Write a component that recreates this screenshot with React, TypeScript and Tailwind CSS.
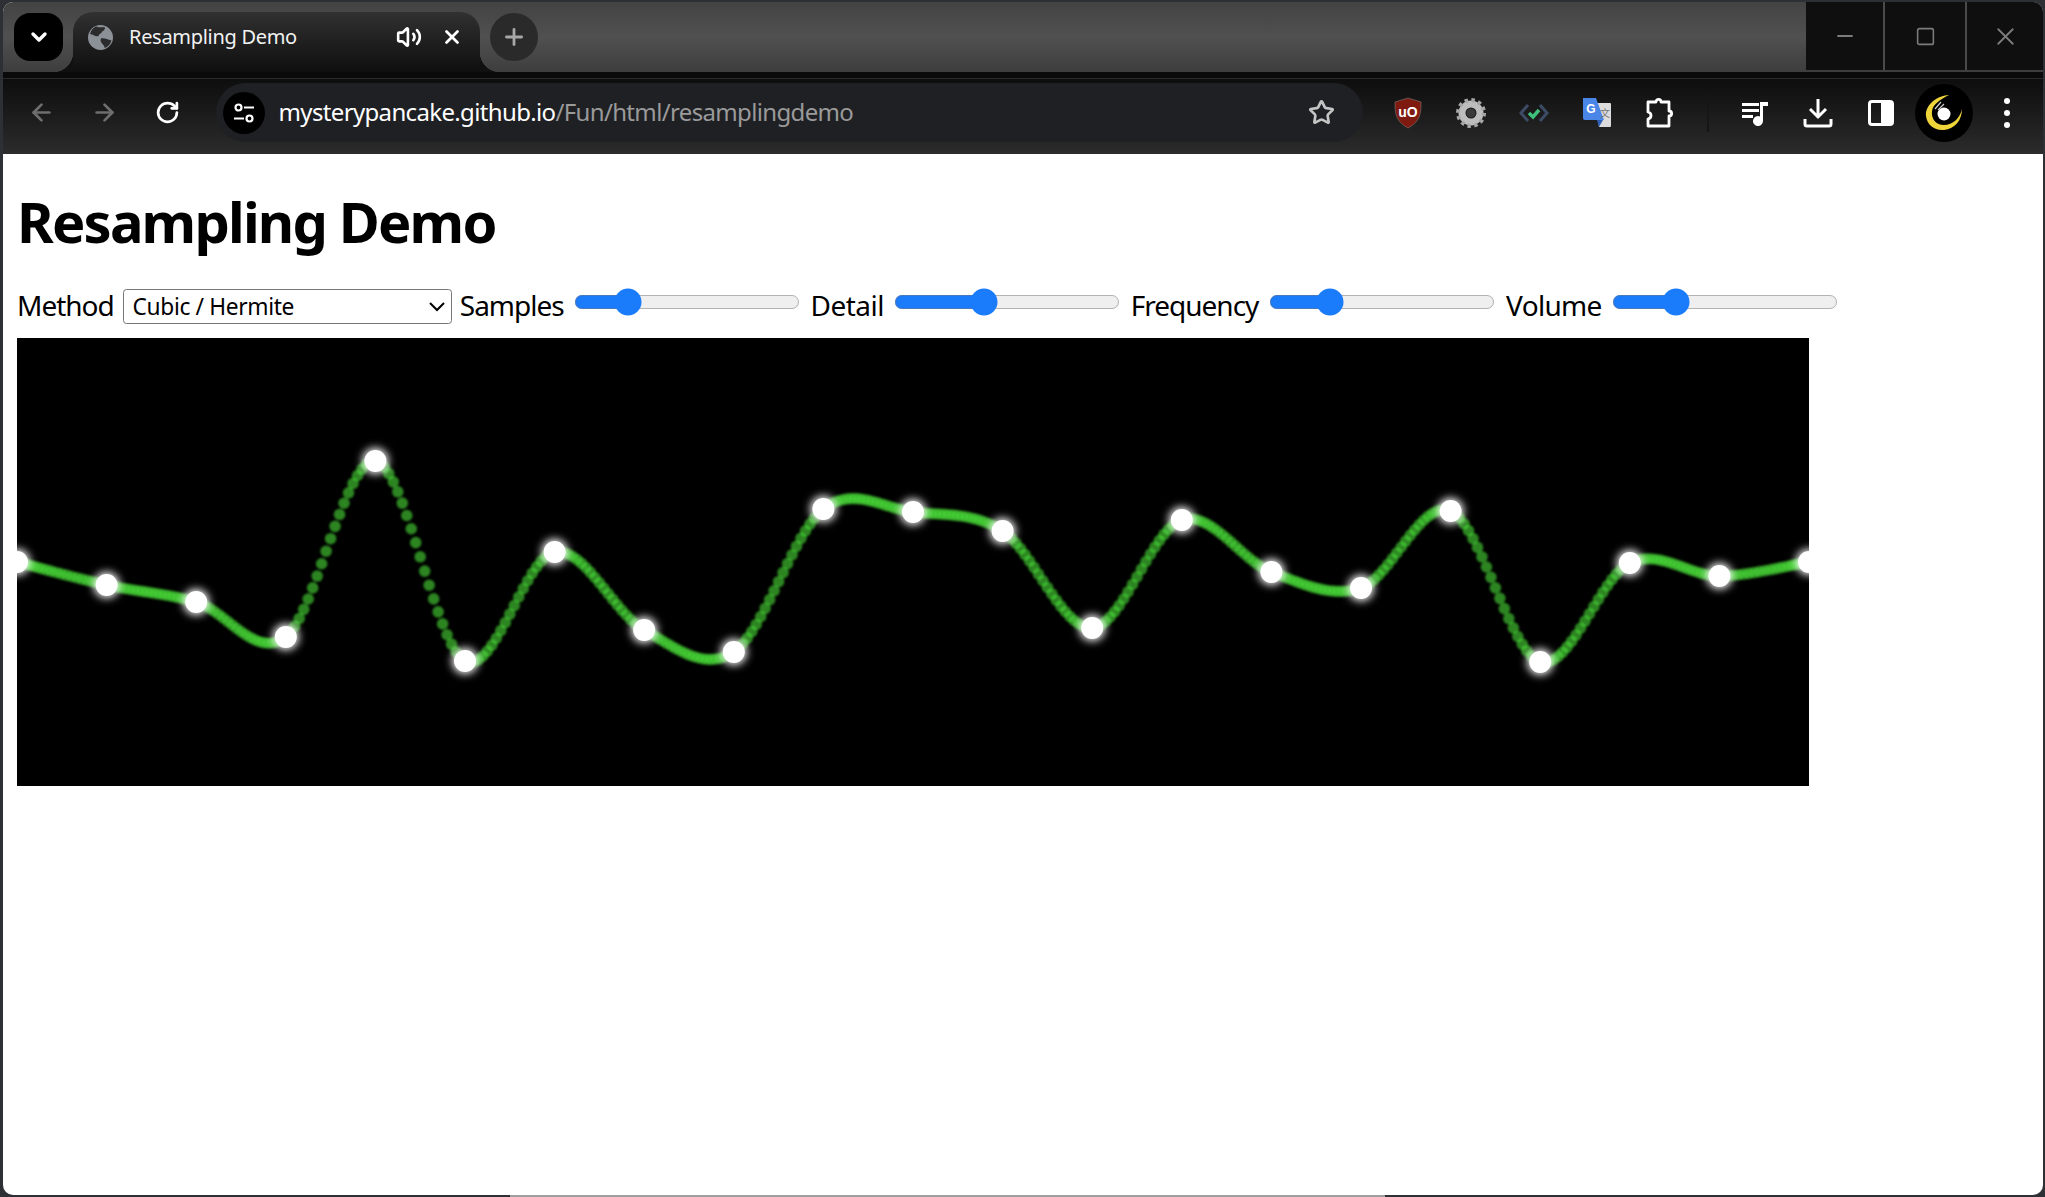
import { ArrowLeft, ArrowRight, ChevronDown, Minus, Plus, RotateCw, Square, Star, Volume2, X } from 'lucide-react'

const ys = [562, 585, 602, 637, 461, 661, 552, 630, 652, 509, 512, 531, 628, 520, 572, 588, 511, 662, 563, 576, 562]
const step = 89.6
const nodes = ys.map((y, i) => ({ x: i * step, y: y - 338 }))

// hermite through the nodes, tangents from the neighbours
function curveDots(perSegment: number) {
  const dots: { x: number; y: number }[] = []
  for (let i = 0; i < nodes.length - 1; i++) {
    const p0 = nodes[Math.max(i - 1, 0)]
    const p1 = nodes[i]
    const p2 = nodes[i + 1]
    const p3 = nodes[Math.min(i + 2, nodes.length - 1)]
    for (let k = 0; k < perSegment; k++) {
      const t = k / perSegment
      const t2 = t * t
      const t3 = t2 * t
      const a = 2 * t3 - 3 * t2 + 1
      const b = t3 - 2 * t2 + t
      const c = -2 * t3 + 3 * t2
      const d = t3 - t2
      dots.push({
        x: a * p1.x + (b * (p2.x - p0.x)) / 2 + c * p2.x + (d * (p3.x - p1.x)) / 2,
        y: a * p1.y + (b * (p2.y - p0.y)) / 2 + c * p2.y + (d * (p3.y - p1.y)) / 2,
      })
    }
  }
  return dots
}

function Wave() {
  return (
    <svg width="1792" height="448" viewBox="0 0 1792 448" className="block">
      <defs>
        <filter id="soft" x="-10%" y="-10%" width="120%" height="120%">
          <feGaussianBlur stdDeviation="0.8" />
        </filter>
        <filter id="glow" x="-80%" y="-80%" width="260%" height="260%">
          <feGaussianBlur stdDeviation="4" />
        </filter>
      </defs>
      <g filter="url(#soft)">
        {curveDots(20).map((d, i) => (
          <circle key={i} cx={d.x} cy={d.y} r="5.800" fill="#4ce63a" fillOpacity="0.58" />
        ))}
      </g>
      {nodes.map((n, i) => (
        <g key={i}>
          <circle cx={n.x} cy={n.y} r="13" fill="#fff" filter="url(#glow)" />
          <circle cx={n.x} cy={n.y} r="11" fill="#fff" />
        </g>
      ))}
    </svg>
  )
}

function Slider({ value }: { value: number }) {
  return (
    <input
      type="range"
      min={0}
      max={100}
      defaultValue={value}
      className="[zoom:1.75] mx-[2px] mt-[1px] w-[129px] align-baseline accent-[#1a7bfb]"
    />
  )
}

function ToolButton({ children }: { children: React.ReactNode }) {
  return <div className="flex h-[44px] w-[63px] shrink-0 items-center justify-center">{children}</div>
}

function TabBar() {
  return (
    <div className="flex h-[70px] shrink-0 items-stretch bg-gradient-to-b from-[#434343] via-[#505050] to-[#3e3e3e]">
      <div className="ml-[11px] mt-[11px] flex h-[48px] w-[49px] items-center justify-center rounded-[16px] bg-black">
        <ChevronDown size={24} strokeWidth={3.4} className="text-white" />
      </div>
      <div className="relative ml-[10px] mt-[10px] flex w-[407px] items-center rounded-t-[20px] bg-gradient-to-b from-[#313131] to-[#0f0f0f] pb-[10px] pl-[15px]">
        <div className="absolute bottom-0 left-[-20px] h-[20px] w-[20px] bg-[radial-gradient(circle_at_0_0,transparent_20px,#101010_20.5px)]" />
        <div className="absolute bottom-0 right-[-20px] h-[20px] w-[20px] bg-[radial-gradient(circle_at_100%_0,transparent_20px,#101010_20.5px)]" />
        <svg width="25" height="25" viewBox="0 0 25 25" className="shrink-0">
          <circle cx="12.5" cy="12.5" r="12.5" fill="#8b9197" />
          <path d="M8 1.5c3 1 6 1 8.5 .5 1 2 -.5 4 -2.5 4.500-.5 2.500-3 2-3.500 4.500-3 1-5-1.500-8.500-2 .8-3.200 3-6 6-7.500z" fill="#2b2b2b" />
          <path d="M13 13.500c3-.8 6 .5 10.500 2-1 3.500-3.500 6.500-7 7.500 .5-2-1.500-3-2.500-4.500-1-1.500-2-3-1-5z" fill="#2b2b2b" />
        </svg>
        <span className="ml-[16px] w-[269px] font-['Noto_Sans'] text-[20px] leading-none tracking-[-0.3px] text-[#f2f2f2]">Resampling Demo</span>
        <Volume2 size={26} strokeWidth={2.4} className="ml-[-2px] text-white" />
        <X size={22} strokeWidth={3} className="ml-[19px] text-white" />
      </div>
      <div className="ml-[10px] mt-[11px] flex h-[48px] w-[48px] items-center justify-center rounded-full bg-[#2a2a2a]">
        <Plus size={26} strokeWidth={2.6} className="text-[#a8a8a8]" />
      </div>
      <div className="flex-1" />
      <div className="flex h-[68px] w-[237px] bg-[#0f0f0f] text-[#7c7c7c]">
        <div className="flex w-[79px] items-center justify-center border-r-2 border-[#4a4a4a]">
          <Minus size={24} strokeWidth={1.8} />
        </div>
        <div className="flex w-[82px] items-center justify-center border-r-2 border-[#4a4a4a]">
          <Square size={21} strokeWidth={1.8} />
        </div>
        <div className="flex flex-1 items-center justify-center">
          <X size={29} strokeWidth={1.5} />
        </div>
      </div>
    </div>
  )
}

function Toolbar() {
  return (
    <div className="flex h-[82px] shrink-0 flex-col bg-gradient-to-b from-[#0b0b0b] to-[#2c2c2c]">
      <div className="h-[7px] border-b border-[#2a2a2a] bg-[#0a0a0a]" />
      <div className="flex flex-1 items-center pl-[6.500px] pb-[8px]">
        <ToolButton><ArrowLeft size={27} strokeWidth={2.4} className="text-[#6e6e6e]" /></ToolButton>
        <ToolButton><ArrowRight size={27} strokeWidth={2.4} className="text-[#6e6e6e]" /></ToolButton>
        <ToolButton><RotateCw size={25} strokeWidth={2.6} className="text-white" /></ToolButton>
        <div className="ml-[17px] flex h-[59px] w-[1147px] shrink-0 items-center rounded-full bg-[#1f2024] pl-[7px] pr-[28px]">
          <div className="flex h-[42px] w-[42px] items-center justify-center rounded-full bg-black">
            <svg width="24" height="24" viewBox="0 0 24 24" fill="none" stroke="#fff" strokeWidth="2.2">
              <circle cx="6.500" cy="6.500" r="3" />
              <path d="M12 6.500h10M2 17.500h10" />
              <circle cx="17.500" cy="17.500" r="3" />
            </svg>
          </div>
          <div className="mb-[2px] ml-[14px] flex-1 font-['Noto_Sans'] text-[24px] tracking-[-0.65px] text-white">
            mysterypancake.github.io<span className="text-[#9a9a9a]">/Fun/html/resamplingdemo</span>
          </div>
          <Star size={27} strokeWidth={2.4} className="text-[#c4c4c4]" />
        </div>
        <div className="ml-[14px] flex items-center">
          <ToolButton>
            <svg width="28" height="32" viewBox="0 0 28 32">
              <path d="M14 1l13 4c0 10 0 19-13 26C1 24 1 15 1 5z" fill="#7f1a10" stroke="#8a8a8a" strokeWidth=".5" />
              <text x="14" y="20" textAnchor="middle" fill="#fff" fontSize="14" fontWeight="700" fontFamily="Liberation Sans, sans-serif">uO</text>
            </svg>
          </ToolButton>
          <ToolButton>
            <svg width="30" height="30" viewBox="0 0 30 30">
              <circle cx="15" cy="15" r="9" fill="none" stroke="#bdbdbd" strokeWidth="7" />
              <circle cx="15" cy="15" r="13" fill="none" stroke="#a6a6a6" strokeWidth="4" strokeDasharray="3.400 3.407" />
              <circle cx="15" cy="15" r="4.500" fill="#3a3a3a" />
            </svg>
          </ToolButton>
          <ToolButton>
            <svg width="30" height="22" viewBox="0 0 30 22" fill="none">
              <path d="M9 3l-7 8 7 8M21 3l7 8-7 8" stroke="#3d4c66" strokeWidth="3" />
              <path d="M10 11l4 4 6-7" stroke="#3fc07a" strokeWidth="3.500" />
            </svg>
          </ToolButton>
          <ToolButton>
            <svg width="30" height="30" viewBox="0 0 30 30">
              <path d="M13 5h15a1 1 0 0 1 1 1v22a1 1 0 0 1-1 1H17z" fill="#dcdcdc" />
              <path d="M1 0h13l8 22H3a2 2 0 0 1-2-2z" fill="#4a86e8" />
              <path d="M15 22h6l-4 7z" fill="#2e5fb8" />
              <text x="9" y="15" textAnchor="middle" fill="#fff" fontSize="12" fontWeight="700" fontFamily="Liberation Sans, sans-serif">G</text>
              <text x="23" y="19" textAnchor="middle" fill="#777" fontSize="10" fontFamily="Noto Sans CJK SC, sans-serif">文</text>
            </svg>
          </ToolButton>
          <ToolButton>
            <svg width="30" height="32" viewBox="0 0 30 32" fill="none" stroke="#fff" strokeWidth="2.800" strokeLinejoin="round">
              <path d="M3 5h8c0-3.500 5-3.500 5 0h8v9c3.500 0 3.500 5 0 5v10H3v-7c4-1 4-6 0-7z" />
            </svg>
          </ToolButton>
        </div>
        <div className="flex w-[32px] shrink-0 justify-center">
          <div className="h-[38px] w-[2px] bg-[#161616]" />
        </div>
        <ToolButton>
          <svg width="28" height="26" viewBox="0 0 28 26" fill="#fff">
            <path d="M1 3h17v3H1zM1 9h17v3H1zM1 15h11v3H1z" />
            <path d="M19 2h8v4h-5v15a5 5 0 1 1-3-4.500z" />
          </svg>
        </ToolButton>
        <ToolButton>
          <svg width="30" height="30" viewBox="0 0 30 30" fill="none" stroke="#fff" strokeWidth="3">
            <path d="M15 1v18M7 11l8 8 8-8" />
            <path d="M2 21v5a2 2 0 0 0 2 2h22a2 2 0 0 0 2-2v-5" />
          </svg>
        </ToolButton>
        <ToolButton>
          <svg width="26" height="26" viewBox="0 0 26 26">
            <rect x="1.500" y="1.500" width="23" height="23" rx="2.500" fill="none" stroke="#fff" strokeWidth="3" />
            <rect x="13" y="1.500" width="11.500" height="23" fill="#fff" />
          </svg>
        </ToolButton>
        <ToolButton>
          <div className="flex h-[58px] w-[58px] shrink-0 items-center justify-center rounded-full bg-black">
            <svg width="38" height="38" viewBox="0 0 38 38" fill="none">
              <path d="M24 1C10 2 0 12 1 22c1 9 9 15 18 14 11-1 18-10 18-21-2 9-9 16-18 16-8 0-13-6-12-14 1-7 9-12 17-16z" fill="#f0d53a" />
              <circle cx="19" cy="20" r="6.500" fill="#fff" />
              <path d="M10 15l6-7M13 16l6-6" stroke="#ccc" strokeWidth="1.200" />
            </svg>
          </div>
        </ToolButton>
        <ToolButton>
          <div className="flex flex-col gap-[6px]">
            <div className="h-[6px] w-[6px] rounded-full bg-white" />
            <div className="h-[6px] w-[6px] rounded-full bg-white" />
            <div className="h-[6px] w-[6px] rounded-full bg-white" />
          </div>
        </ToolButton>
      </div>
    </div>
  )
}

export default function App() {
  return (
    <div className="flex h-[1197px] w-full flex-col overflow-hidden bg-[#2d3035] pl-[3px] pr-[2px] pt-[2px]">
      <div className="flex flex-1 flex-col overflow-hidden rounded-[10px] bg-white">
        <TabBar />
        <Toolbar />
        <main className="px-[14px] font-['Noto_Sans'] text-[28px] text-black">
          <h1 className="pt-[30px] text-[56px] font-bold leading-[74px] tracking-[-1.8px]">Resampling Demo</h1>
          <div className="mt-[28px] flex h-[52px] items-start whitespace-nowrap leading-[38px] tracking-[-1px]">
            <span className="mr-[9px]">Method</span>
            <select className="[zoom:1.75] mt-[1.500px] h-[20px] w-[188px] rounded-[2px] border border-[#767676] bg-white pl-[1px] font-['Noto_Sans'] text-[13px] tracking-[-0.2px]" defaultValue="hermite">
              <option value="hermite">Cubic / Hermite</option>
            </select>
            <span className="ml-[8px] mr-[7px]">Samples</span>
            <Slider value={20} />
            <span className="mx-[7px] tracking-[-0.5px]">Detail</span>
            <Slider value={38} />
            <span className="mx-[7px]">Frequency</span>
            <Slider value={24} />
            <span className="ml-[8px] mr-[7px] tracking-[-0.7px]">Volume</span>
            <Slider value={25} />
          </div>
          <div className="h-[448px] w-[1792px] overflow-hidden bg-black">
            <Wave />
          </div>
        </main>
      </div>
      <div className="ml-[-3px] mr-[-2px] flex h-[2px] shrink-0">
        <div className="w-[510px] bg-[#2d3035]" />
        <div className="w-[875px] bg-[#a0a0a0]" />
        <div className="flex-1 bg-[#2d3035]" />
      </div>
    </div>
  )
}
